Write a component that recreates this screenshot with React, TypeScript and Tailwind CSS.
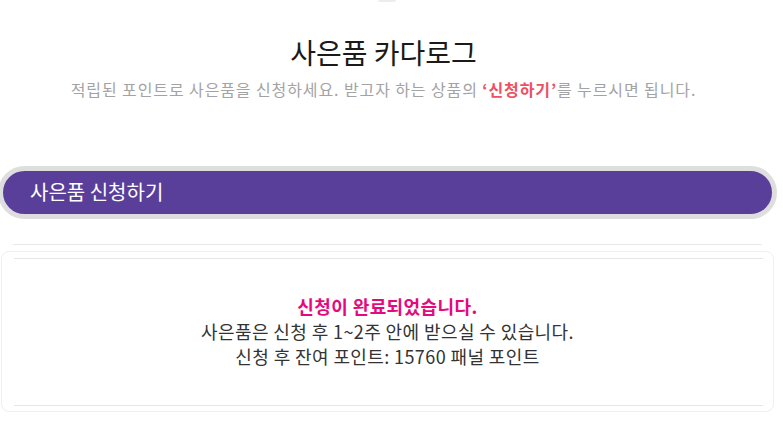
export default function App() {
  return (
    <div
      className="w-[783px] h-[435px] overflow-hidden bg-white"
      style={{ fontFamily: '"Noto Sans CJK KR", "Noto Sans", sans-serif' }}
    >
      <div className="w-[18px] h-[2px] rounded-b bg-[#ececec] ml-[378px]" />

      <div className="pr-[16px]">
        <h1 className="mt-[32px] text-center text-[28px] leading-[36px] font-normal text-[#1a1a1a]">
          사은품 카다로그
        </h1>
        <p className="mt-[7px] text-center text-[16px] leading-[24px] tracking-[0.9px] text-[#a3a3a3]">
          적립된 포인트로 사은품을 신청하세요. 받고자 하는 상품의{" "}
          <span className="font-bold text-[#ef4f63]">‘신청하기’</span>를 누르시면 됩니다.
        </p>
      </div>

      <div className="mt-[65px] ml-[-2px] w-[779px] h-[53px] rounded-full border-[5px] border-[#dedede] bg-[#5a3f9a] flex items-center pl-[27px]">
        <span className="text-[20px] text-white leading-none pb-[2px]">사은품 신청하기</span>
      </div>

      <div className="mt-[25px] ml-[13px] w-[749px] h-px bg-[#e8e8e8]" />

      <div className="mt-[6px] ml-[1px] w-[773px] h-[161px] rounded-[8px] border border-[#efefef] pt-[6px] flex flex-col">
        <div className="ml-[12px] w-[749px] h-px bg-[#e6e6e6]" />
        <div className="flex-1 flex flex-col items-center justify-center text-center pb-[2px] tracking-[0.4px]">
          <p className="text-[18px] leading-[25px] font-bold text-[#e5087e]">신청이 완료되었습니다.</p>
          <p className="text-[18px] leading-[25px] text-[#333333]">사은품은 신청 후 1~2주 안에 받으실 수 있습니다.</p>
          <p className="text-[18px] leading-[25px] text-[#333333]">신청 후 잔여 포인트: 15760 패널 포인트</p>
        </div>
        <div className="ml-[12px] w-[749px] h-px bg-[#e6e6e6] mb-[5px]" />
      </div>
    </div>
  );
}
